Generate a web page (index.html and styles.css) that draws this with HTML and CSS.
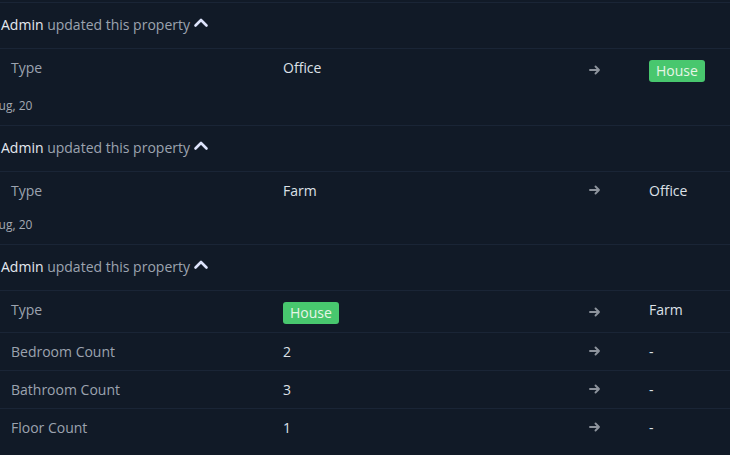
FILE: index.html
```html
<!DOCTYPE html>
<html>
<head>
<meta charset="utf-8">
<link rel="stylesheet" href="styles.css">
</head>
<body>
<div class="feed">
  <section class="entry">
    <div class="head"><span class="title"><span class="who">Admin</span> <span class="act">updated this property</span></span>
      <svg class="chev" width="16" height="11" viewBox="0 0 16 11"><path d="M2.5 8.5 L8 3 L13.5 8.5" fill="none" stroke="currentColor" stroke-width="2.6" stroke-linecap="round" stroke-linejoin="round"/></svg>
    </div>
    <div class="rows">
      <div class="row tall"><span class="lbl">Type</span><span class="val">Office</span><span class="arr"><svg width="12" height="10" viewBox="0 0 12 10"><path d="M1 5 H10 M6.5 1.5 L10 5 L6.5 8.5" fill="none" stroke="currentColor" stroke-width="1.9" stroke-linecap="round" stroke-linejoin="round"/></svg></span><span class="bval"><span class="badge">House</span></span></div>
    </div>
    <div class="date">Aug, 20</div>
  </section>
  <section class="entry">
    <div class="head"><span class="title"><span class="who">Admin</span> <span class="act">updated this property</span></span>
      <svg class="chev" width="16" height="11" viewBox="0 0 16 11"><path d="M2.5 8.5 L8 3 L13.5 8.5" fill="none" stroke="currentColor" stroke-width="2.6" stroke-linecap="round" stroke-linejoin="round"/></svg>
    </div>
    <div class="rows">
      <div class="row"><span class="lbl">Type</span><span class="val">Farm</span><span class="arr"><svg width="12" height="10" viewBox="0 0 12 10"><path d="M1 5 H10 M6.5 1.5 L10 5 L6.5 8.5" fill="none" stroke="currentColor" stroke-width="1.9" stroke-linecap="round" stroke-linejoin="round"/></svg></span><span class="val">Office</span></div>
    </div>
    <div class="date">Aug, 20</div>
  </section>
  <section class="entry">
    <div class="head"><span class="title"><span class="who">Admin</span> <span class="act">updated this property</span></span>
      <svg class="chev" width="16" height="11" viewBox="0 0 16 11"><path d="M2.5 8.5 L8 3 L13.5 8.5" fill="none" stroke="currentColor" stroke-width="2.6" stroke-linecap="round" stroke-linejoin="round"/></svg>
    </div>
    <div class="rows">
      <div class="row tall"><span class="lbl">Type</span><span class="bval"><span class="badge">House</span></span><span class="arr"><svg width="12" height="10" viewBox="0 0 12 10"><path d="M1 5 H10 M6.5 1.5 L10 5 L6.5 8.5" fill="none" stroke="currentColor" stroke-width="1.9" stroke-linecap="round" stroke-linejoin="round"/></svg></span><span class="val">Farm</span></div>
      <div class="row"><span class="lbl">Bedroom Count</span><span class="val">2</span><span class="arr"><svg width="12" height="10" viewBox="0 0 12 10"><path d="M1 5 H10 M6.5 1.5 L10 5 L6.5 8.5" fill="none" stroke="currentColor" stroke-width="1.9" stroke-linecap="round" stroke-linejoin="round"/></svg></span><span class="val">-</span></div>
      <div class="row"><span class="lbl">Bathroom Count</span><span class="val">3</span><span class="arr"><svg width="12" height="10" viewBox="0 0 12 10"><path d="M1 5 H10 M6.5 1.5 L10 5 L6.5 8.5" fill="none" stroke="currentColor" stroke-width="1.9" stroke-linecap="round" stroke-linejoin="round"/></svg></span><span class="val">-</span></div>
      <div class="row"><span class="lbl">Floor Count</span><span class="val">1</span><span class="arr"><svg width="12" height="10" viewBox="0 0 12 10"><path d="M1 5 H10 M6.5 1.5 L10 5 L6.5 8.5" fill="none" stroke="currentColor" stroke-width="1.9" stroke-linecap="round" stroke-linejoin="round"/></svg></span><span class="val">-</span></div>
    </div>
    <div class="date">Aug, 20</div>
  </section>
</div>
</body>
</html>
```
FILE: styles.css
```css
html, body {
  margin: 0;
  padding: 0;
  background: #111a27;
  overflow: hidden;
}
body {
  font-family: "Open Sans", "Noto Sans", sans-serif;
  font-size: 14px;
  color: #d1d5db;
}
.feed {
  padding-top: 2px;
}
.entry {
  border-top: 1px solid #1a2536;
}
.head {
  height: 46px;
  box-sizing: border-box;
  padding-bottom: 3px;
  display: flex;
  align-items: center;
  padding-left: 1px;
  border-bottom: 1px solid #1a2536;
}
.title {
  white-space: pre;
}
.who {
  color: #e5e9f0;
}
.act {
  color: #9ca3af;
}
.chev {
  color: #dde3fb;
  margin-left: 3px;
  margin-top: -3px;
}
.row {
  display: grid;
  grid-template-columns: 272px 306px 60px 1fr;
  align-items: center;
  height: 37px;
  box-sizing: border-box;
  padding-bottom: 1px;
  padding-left: 11px;
}
.row + .row {
  border-top: 1px solid #1a2536;
  height: 38px;
}
.row.tall {
  height: 41px;
  padding-bottom: 0;
}
.lbl {
  color: #9ca3af;
}
.val {
  color: #dde1e7;
}
.row.tall .lbl,
.row.tall .val {
  margin-top: -4px;
}
.arr {
  color: #8d939c;
  display: flex;
  align-items: center;
}
.badge {
  display: inline-block;
  background: #48c76e;
  color: #e6f5e6;
  border-radius: 3px;
  padding: 0 7px;
  line-height: 22px;
  margin-top: 2px;
}
.date {
  height: 35px;
  box-sizing: border-box;
  padding-bottom: 5px;
  display: flex;
  align-items: center;
  margin-left: -9px;
  font-size: 12px;
  color: #a3a9b2;
}
```
